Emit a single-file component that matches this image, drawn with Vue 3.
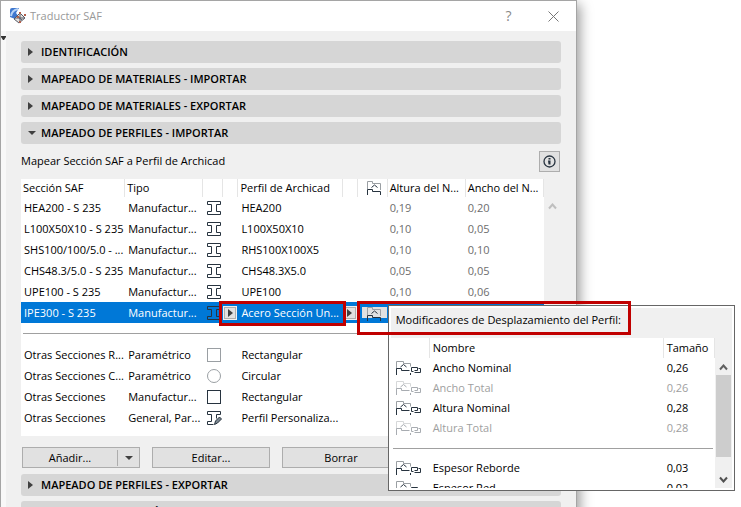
<script setup>
import { ref } from "vue";

const sections = ref([
  { title: "IDENTIFICACIÓN", open: false },
  { title: "MAPEADO DE MATERIALES - IMPORTAR", open: false },
  { title: "MAPEADO DE MATERIALES - EXPORTAR", open: false },
  { title: "MAPEADO DE PERFILES - IMPORTAR", open: true },
]);

const lowerSections = ref([
  { title: "MAPEADO DE PERFILES - EXPORTAR", open: false },
  { title: "AJUSTES DE CATEGORÍAS", open: false },
]);

const profiles = [
  { saf: "HEA200 - S 235", type: "Manufactur...", profile: "HEA200", h: "0,19", w: "0,20" },
  { saf: "L100X50X10 - S 235", type: "Manufactur...", profile: "L100X50X10", h: "0,10", w: "0,05" },
  { saf: "SHS100/100/5.0 - ...", type: "Manufactur...", profile: "RHS100X100X5", h: "0,10", w: "0,10" },
  { saf: "CHS48.3/5.0 - S 235", type: "Manufactur...", profile: "CHS48.3X5.0", h: "0,05", w: "0,05" },
  { saf: "UPE100 - S 235", type: "Manufactur...", profile: "UPE100", h: "0,10", w: "0,06" },
];

// fallback rules, listed under the divider
const others = [
  { saf: "Otras Secciones R...", type: "Paramétrico", icon: "square", profile: "Rectangular" },
  { saf: "Otras Secciones C...", type: "Paramétrico", icon: "circle", profile: "Circular" },
  { saf: "Otras Secciones", type: "Manufactur...", icon: "square-dark", profile: "Rectangular" },
  { saf: "Otras Secciones", type: "General, Par...", icon: "custom", profile: "Perfil Personaliza..." },
];

const modifiers = [
  { name: "Ancho Nominal", size: "0,26" },
  { name: "Ancho Total", size: "0,26", disabled: true },
  { name: "Altura Nominal", size: "0,28" },
  { name: "Altura Total", size: "0,28", disabled: true },
];

const thickness = [
  { name: "Espesor Reborde", size: "0,03" },
  { name: "Espesor Red", size: "0,02" },
];
</script>

<template>
  <main class="stage">
    <section class="dialog" aria-label="Traductor SAF">
      <header class="titlebar">
        <svg class="app-icon" width="16" height="16" viewBox="0 0 16 16">
          <path d="M0 2q0-2 2-2h7L6 5l3 4-4 2-5-2z" fill="#3f78cf" />
          <path d="M1 8q1-6 7-7" fill="none" stroke="#b9d4f5" stroke-width="2" />
          <path d="M4 11l5 4 6-5-5-5z" fill="#e7e2df" stroke="#555b66" />
          <path d="M5 10h9M10 6v8M7 8l5 4" fill="none" stroke="#555b66" />
          <path d="M9 4h2v2H9zM14 6h2v2h-2zM9 13h2v2H9zM7 8h2v2H7z" fill="#b2604c" />
        </svg>
        <h1 class="title">Traductor SAF</h1>
        <button class="title-btn" aria-label="Ayuda">?</button>
        <button class="title-btn" aria-label="Cerrar">
          <svg width="11" height="11" viewBox="0 0 11 11">
            <path d="M.5.5l10 10M10.5.5l-10 10" fill="none" stroke="#777" />
          </svg>
        </button>
      </header>

      <div class="body">
        <div class="gutter">
          <svg width="5" height="4" viewBox="0 0 5 4"><path d="M0 0h5v1L3 4H2L0 1z" fill="#333" /></svg>
        </div>

        <div class="content">
          <div class="sections">
            <button v-for="s in sections" :key="s.title" class="section" :aria-expanded="s.open">
              <span class="caret" :class="{ open: s.open }"></span>{{ s.title }}
            </button>
          </div>

          <div class="caption">
            <span>Mapear Sección SAF a Perfil de Archicad</span>
            <button class="info" aria-label="Información">
              <svg width="13" height="13" viewBox="0 0 13 13">
                <circle cx="6.5" cy="6.5" r="5.5" fill="none" stroke="#27333f" stroke-width="1.3" />
                <path d="M5.5 3h2v1.5h-2zM5 5.5h2.5v4H5.5z" fill="#27333f" />
              </svg>
            </button>
          </div>

          <div class="list">
            <table class="grid">
              <colgroup>
                <col class="c-saf" /><col class="c-type" /><col class="c-icon" /><col class="c-arrow" />
                <col class="c-saf" /><col class="c-arrow" /><col class="c-flag" /><col class="c-num" /><col class="c-num" />
              </colgroup>
              <thead>
                <tr>
                  <th>Sección SAF</th>
                  <th>Tipo</th>
                  <th></th>
                  <th></th>
                  <th>Perfil de Archicad</th>
                  <th></th>
                  <th class="center">
                    <svg width="15" height="14" viewBox="0 0 15 14">
                      <path class="soft" d="M.5 8V.5h5v2h8V9" />
                      <path d="M.5 14V8.500h5v2h8V14M4.500 6.500l3-2.500 3 2.500" />
                    </svg>
                  </th>
                  <th>Altura del N...</th>
                  <th>Ancho del N...</th>
                </tr>
              </thead>
              <tbody>
                <tr v-for="p in profiles" :key="p.saf">
                  <td>{{ p.saf }}</td>
                  <td>{{ p.type }}</td>
                  <td class="icon">
                    <svg width="14" height="14" viewBox="0 0 14 14">
                      <path d="M.5.5h13v3h-4v7h4v3H.5v-3h4v-7h-4z" />
                    </svg>
                  </td>
                  <td></td>
                  <td>{{ p.profile }}</td>
                  <td></td>
                  <td></td>
                  <td class="num">{{ p.h }}</td>
                  <td class="num">{{ p.w }}</td>
                </tr>
                <tr class="selected">
                  <td>IPE300 - S 235</td>
                  <td>Manufactur...</td>
                  <td class="icon">
                    <svg width="14" height="14" viewBox="0 0 14 14">
                      <path d="M.5.5h13v3h-4v7h4v3H.5v-3h4v-7h-4z" />
                    </svg>
                  </td>
                  <td class="tight"><button class="mini" aria-label="Elegir sección"><span class="caret"></span></button></td>
                  <td class="anchor">Acero Sección Un...<span class="mark mark-profile"></span></td>
                  <td class="tight"><button class="mini" aria-label="Elegir perfil"><span class="caret"></span></button></td>
                  <td class="anchor tight">
                    <button class="flag-btn" aria-label="Modificadores">
                      <svg width="15" height="14" viewBox="0 0 15 14">
                        <path class="soft" d="M.5 8V.5h5v2h8V9" />
                        <path d="M.5 14V8.500h5v2h8V14M4.500 6.500l3-2.500 3 2.500" />
                      </svg>
                    </button>
                    <div class="popup">
                      <h2 class="popup-title">Modificadores de Desplazamiento del Perfil:</h2>
                      <div class="popup-body">
                        <table class="mods">
                          <colgroup><col class="m-icon" /><col /><col class="m-size" /></colgroup>
                          <thead>
                            <tr><th></th><th>Nombre</th><th>Tamaño</th></tr>
                          </thead>
                          <tbody v-for="(group, i) in [modifiers, thickness]" :key="i">
                            <tr v-if="i" class="rule"><td colspan="3"><hr /></td></tr>
                            <tr v-for="m in group" :key="m.name" :class="{ disabled: m.disabled }">
                              <td>
                                <svg width="26" height="14" viewBox="0 0 26 14">
                                  <path class="soft" d="M.5 8V.5h7v2h7v3" />
                                  <path d="M.5 14V7.500h5v2h8M4.500 6l3-2.500 3 2.500M14.500 14v-2" />
                                  <path d="M17.500 10.500h-2v-4h6v3h-3M22.500 7.500h2v4h-6" />
                                </svg>
                              </td>
                              <td>{{ m.name }}</td>
                              <td>{{ m.size }}</td>
                            </tr>
                          </tbody>
                        </table>
                        <div class="scroll">
                          <svg width="9" height="7" viewBox="0 0 9 7"><path d="M1 5.500l3.500-4 3.500 4" stroke="#606060" stroke-width="2" /></svg>
                          <div class="thumb"></div>
                          <svg width="9" height="7" viewBox="0 0 9 7"><path d="M1 1.500l3.500 4 3.500-4" stroke="#505050" stroke-width="2" /></svg>
                        </div>
                      </div>
                      <span class="mark mark-popup"></span>
                    </div>
                  </td>
                  <td></td>
                  <td></td>
                </tr>
                <tr class="rule"><td colspan="9"><hr /></td></tr>
                <tr v-for="(o, i) in others" :key="i">
                  <td>{{ o.saf }}</td>
                  <td>{{ o.type }}</td>
                  <td class="icon">
                    <svg width="15" height="14" viewBox="0 0 15 14">
                      <rect v-if="o.icon === 'square'" class="soft" x=".5" y=".5" width="13" height="13" />
                      <circle v-else-if="o.icon === 'circle'" class="soft" cx="7" cy="7" r="6.500" />
                      <rect v-else-if="o.icon === 'square-dark'" x=".5" y=".5" width="13" height="13" />
                      <template v-else>
                        <path d="M6.500 13.500h-6v-3h4v-7h-4v-3h13v3h-4v4" />
                        <path d="M7.500 13.500l1-3.500 4-4 2 2-4 4z" fill="#7b8790" />
                      </template>
                    </svg>
                  </td>
                  <td></td>
                  <td>{{ o.profile }}</td>
                  <td></td>
                  <td></td>
                  <td></td>
                  <td></td>
                </tr>
              </tbody>
            </table>
            <div class="list-scroll">
              <svg width="9" height="7" viewBox="0 0 9 7"><path d="M1 5.500l3.500-4 3.500 4" stroke="#bfbfbf" stroke-width="2" /></svg>
            </div>
          </div>

          <div class="actions">
            <button class="action split"><span class="split-label">Añadir...</span><span class="caret open"></span></button>
            <button class="action">Editar...</button>
            <button class="action">Borrar</button>
          </div>

          <div class="sections">
            <button v-for="s in lowerSections" :key="s.title" class="section" :aria-expanded="s.open">
              <span class="caret" :class="{ open: s.open }"></span>{{ s.title }}
            </button>
          </div>
        </div>
      </div>
    </section>
  </main>
</template>

<style>
body {
  background: #fff;
  overflow: hidden;
}
</style>

<style scoped>
* {
  box-sizing: border-box;
}

.stage {
  height: 100vh;
  padding-right: 164px;
  overflow: hidden;
  font: 11px/16px "Open Sans", "Noto Sans", sans-serif;
  color: #000;
}

button {
  font: inherit;
  color: inherit;
  padding: 0;
  border: 0;
}

svg {
  display: block;
  flex: none;
  fill: none;
}

.dialog {
  min-height: 110vh;
  display: flex;
  flex-direction: column;
  border: 1px solid #a5a5a5;
  background: #f0f0f0;
  box-shadow: 3px 4px 12px rgba(0, 0, 0, 0.4);
}

.titlebar {
  display: flex;
  align-items: center;
  height: 30px;
  padding-left: 9px;
  background: #fff;
}

.title {
  flex: 1;
  margin: 0 0 0 4px;
  font-size: 11px;
  font-weight: 400;
  color: #999;
}

.title-btn {
  display: flex;
  align-items: center;
  justify-content: center;
  width: 45px;
  height: 30px;
  background: none;
  font-size: 14px;
  color: #888;
}

.body {
  flex: 1;
  display: flex;
}

.gutter {
  width: 5px;
  padding-top: 5px;
  background: #f8f8f8;
}

.content {
  flex: 1;
  min-width: 0;
  padding: 10px 15px 0;
}

.sections {
  display: flex;
  flex-direction: column;
  gap: 5px;
}

.section {
  display: flex;
  align-items: center;
  height: 22px;
  padding-left: 7px;
  border-radius: 3px;
  background: #d6d6d6;
  font-weight: 600;
}

.section .caret {
  width: 13px;
}

.caret {
  display: flex;
  flex: none;
}

.caret::before {
  content: "";
  border-left: 5px solid #404040;
  border-top: 4px solid transparent;
  border-bottom: 4px solid transparent;
}

.caret.open::before {
  border-top: 4px solid #404040;
  border-left: 4px solid transparent;
  border-right: 4px solid transparent;
  border-bottom: 0;
}

.caption {
  display: flex;
  align-items: center;
  justify-content: space-between;
  height: 35px;
  padding: 0 1px 1px 0;
}

.info {
  display: flex;
  align-items: center;
  justify-content: center;
  width: 21px;
  height: 21px;
  border: 1px solid #adadad;
  background: #e1e1e1;
}

.list {
  display: flex;
}

table {
  width: 100%;
  table-layout: fixed;
  border-collapse: separate;
  border-spacing: 0;
  background: #fff;
}

.grid {
  flex: 1;
  min-width: 0;
  padding-bottom: 8px;
}

.c-saf {
  width: 104px;
}

.c-type,
.c-num {
  width: 78px;
}

.c-icon {
  width: 20px;
}

.c-arrow {
  width: 15px;
}

.c-flag {
  width: 30px;
}

th,
td {
  padding: 0 0 0 3px;
  text-align: left;
  font-weight: 400;
  white-space: nowrap;
}

.grid td {
  height: 21px;
}

.grid th {
  height: 18px;
  padding-left: 2px;
  border-right: 1px solid #e5e5e5;
}

.grid th.center {
  padding-left: 9px;
}

.grid td.icon {
  padding-left: 4px;
}

td svg,
th svg {
  stroke: #27333f;
}

.soft {
  stroke: #9a9fa3;
}

.grid td.num {
  padding-left: 2px;
  color: #6d6d6d;
}

.selected > td {
  background: #0078d7;
  color: #fff;
}

.grid td.tight {
  padding: 0;
}

.mini {
  display: flex;
  align-items: center;
  justify-content: center;
  width: 14px;
  height: 14px;
  border: 1px solid #f0f0f0;
  outline: 1px solid #adadad;
  outline-offset: -2px;
  background: #e1e1e1;
}

.anchor {
  position: relative;
}

.flag-btn {
  display: flex;
  width: 25px;
  height: 11px;
  margin-left: 4px;
  padding-left: 5px;
  background: #e1e1e1;
}

.mark {
  position: absolute;
  z-index: 3;
  border: 3px solid #c00000;
  pointer-events: none;
}

.mark-profile {
  inset: -1px -3px -3px -19px;
}

.mark-popup {
  top: -5px;
  left: -32px;
  width: 274px;
  height: 34px;
}

.popup {
  position: absolute;
  z-index: 2;
  top: 3px;
  left: 100%;
  width: 347px;
  height: 186px;
  padding: 2px;
  border: 1px solid #666;
  background: #fff;
  color: #000;
}

.popup-title {
  height: 30px;
  margin: 0;
  padding-left: 5px;
  background: #f0f0f0;
  font-size: 11px;
  font-weight: 400;
  line-height: 24px;
}

.popup-body {
  display: flex;
  height: 150px;
  overflow: hidden;
}

.mods {
  flex: 1;
  min-width: 0;
  align-self: flex-start;
}

.m-icon {
  width: 39px;
}

.m-size {
  width: 51px;
}

.grid .mods td,
.grid .mods th {
  height: 20px;
  padding-left: 3px;
}

.grid .mods td:first-child {
  padding-left: 5px;
}

.disabled {
  color: #a0a0a0;
}

.disabled svg {
  opacity: 0.4;
}

.grid .rule td,
.grid .mods .rule td:first-child {
  padding: 0 2px;
}

hr {
  margin: 0;
  border: 0;
  border-top: 1px solid #a0a0a0;
}

.scroll {
  display: flex;
  flex-direction: column;
  align-items: center;
  flex: none;
  width: 17px;
  padding: 26px 0 5px;
  background: #f0f0f0;
}

.thumb {
  width: 15px;
  height: 82px;
  margin: 4px 0 auto;
  background: #cdcdcd;
}

.list-scroll {
  flex: none;
  width: 17px;
  padding: 24px 0 0 4px;
}

.actions {
  display: flex;
  gap: 12px;
  padding: 11px 1px 6px;
}

.action {
  width: 118px;
  height: 21px;
  border: 1px solid #adadad;
  background: #e1e1e1;
}

.action.split {
  display: flex;
  align-items: center;
}

.split-label {
  flex: 1;
  border-right: 1px solid #adadad;
}

.split .caret {
  width: 21px;
  justify-content: center;
}
</style>
